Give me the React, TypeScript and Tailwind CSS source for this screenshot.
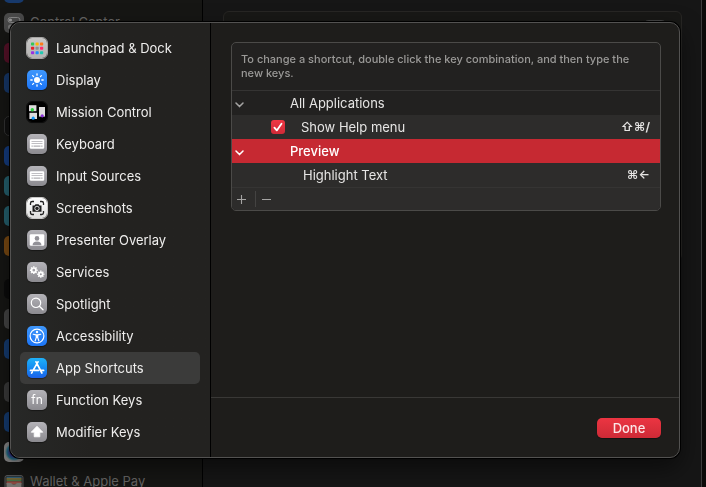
import { useState, type ReactNode } from "react";

function Tile({ className, children }: { className: string; children?: ReactNode }) {
  return (
    <span className={`flex size-5 shrink-0 items-center justify-center overflow-hidden rounded-[5px] shadow-[0_1px_1px_rgba(0,0,0,0.4)] ${className}`}>
      {children}
    </span>
  );
}

const grayTile = "bg-linear-to-b from-[#b4b3b8] to-[#8b8a8f]";
const blueTile = "bg-linear-to-b from-[#3f97fb] to-[#1b74f6]";

function Svg({ children }: { children: ReactNode }) {
  return (
    <svg viewBox="0 0 20 20" className="size-5" fill="none" aria-hidden="true">
      {children}
    </svg>
  );
}

const launchpadDots = [
  "#35c759", "#ffb400", "#ff7a1a",
  "#e8202c", "#8e8e93", "#ff2d6f",
  "#9b30e0", "#1a8cff", "#20c9b0",
];

const LaunchpadIcon = () => (
  <Tile className="bg-linear-to-b from-[#c9c8c7] to-[#b4b3b2] outline outline-[#a5a4a3]">
    <Svg>
      {launchpadDots.map((fill, i) => (
        <rect key={i} x={4 + (i % 3) * 4.5} y={4.4 + Math.floor(i / 3) * 4.4} width="3.2" height="3" rx="0.7" fill={fill} />
      ))}
    </Svg>
  </Tile>
);

const DisplayIcon = () => (
  <Tile className={blueTile}>
    <Svg>
      <circle cx="10" cy="10" r="3" fill="#fff" />
      {[0, 45, 90, 135, 180, 225, 270, 315].map((a) => (
        <path key={a} d="M10 5.2V3.8" stroke="#fff" strokeWidth="1.3" strokeLinecap="round" transform={`rotate(${a} 10 10)`} />
      ))}
    </Svg>
  </Tile>
);

const MissionIcon = () => (
  <Tile className="bg-black outline outline-[#0b0b0b]">
    <Svg>
      <rect x="2" y="3.2" width="7.4" height="6" fill="#dcdadb" />
      <rect x="2.4" y="10.8" width="7.6" height="6.2" fill="#dcdadb" />
      <rect x="12" y="5" width="6" height="9.6" fill="#dcdadb" />
      <circle cx="5.3" cy="7.8" r="1.7" fill="#28d13d" />
      <circle cx="6.2" cy="16.2" r="1.6" fill="#1295f5" />
      <circle cx="15.2" cy="13.8" r="1.6" fill="#8c31d8" />
    </Svg>
  </Tile>
);

const KeyboardIcon = () => (
  <Tile className={grayTile}>
    <Svg>
      <rect x="2.8" y="5.2" width="14.4" height="9.6" rx="1.3" fill="#fff" />
      <path d="M4.5 7.5h11M4.5 9.5h11" stroke="#c0bfc3" strokeWidth="1.2" />
      <path d="M4.5 12.2h1.3M6.5 12.2h7M14.2 12.2h1.3" stroke="#b0afb3" strokeWidth="1.2" />
    </Svg>
  </Tile>
);

const ScreenshotsIcon = () => (
  <Tile className="bg-linear-to-b from-white to-[#dededd] outline outline-[#c9c8c7]">
    <Svg>
      <path d="M3.5 7V5.3Q3.5 3.5 5.3 3.5H7M13 3.5h1.7q1.8 0 1.8 1.8V7M16.5 13v1.7q0 1.8-1.8 1.8H13M7 16.5H5.3q-1.8 0-1.8-1.8V13" stroke="#222" strokeWidth="1.3" />
      <path d="M5.5 7.4h2l1-1.2h3l1 1.2h2v6.3h-9z" fill="#1b1b1b" />
      <circle cx="10" cy="10.4" r="2.2" fill="#222" stroke="#eee" strokeWidth="0.9" />
    </Svg>
  </Tile>
);

const PresenterIcon = () => (
  <Tile className={grayTile}>
    <Svg>
      <rect x="2.7" y="4.2" width="14.6" height="11.6" rx="1.3" fill="#fff" />
      <circle cx="10" cy="8.4" r="2.3" fill="#929197" />
      <path d="M5.6 15.2q0-3.7 4.4-3.7t4.4 3.7z" fill="#929197" />
    </Svg>
  </Tile>
);

const Gear = ({ cx, cy, r }: { cx: number; cy: number; r: number }) => (
  <g stroke="#fff">
    <circle cx={cx} cy={cy} r={r} strokeWidth="1.7" />
    {[0, 45, 90, 135, 180, 225, 270, 315].map((a) => (
      <path key={a} d={`M${cx} ${cy - r - 0.6}v-1.1`} strokeWidth="1.4" transform={`rotate(${a} ${cx} ${cy})`} />
    ))}
  </g>
);

const ServicesIcon = () => (
  <Tile className={grayTile}>
    <Svg>
      <Gear cx={6.8} cy={8.2} r={2.2} />
      <Gear cx={13.8} cy={12.2} r={1.9} />
    </Svg>
  </Tile>
);

const SpotlightIcon = () => (
  <Tile className={grayTile}>
    <Svg>
      <circle cx="9" cy="8.8" r="4.7" stroke="#fff" strokeWidth="1.2" />
      <path d="m12.4 12.3 3.6 3.5" stroke="#fff" strokeWidth="1.4" strokeLinecap="round" />
    </Svg>
  </Tile>
);

const AccessibilityIcon = () => (
  <Tile className={blueTile}>
    <Svg>
      <circle cx="10" cy="10" r="6.9" stroke="#fff" strokeWidth="1.2" />
      <circle cx="10" cy="6" r="1.2" fill="#fff" />
      <path d="M6.2 8.2 9 8.9h2l2.8-.7M10 9v2.4M9.2 9v2.8L8.1 15M10.8 9v2.8l1.1 3.2" stroke="#fff" strokeWidth="1.1" strokeLinecap="round" strokeLinejoin="round" />
    </Svg>
  </Tile>
);

const AppStoreIcon = () => (
  <Tile className="bg-linear-to-b from-[#1fb1f8] to-[#1c62ea]">
    <Svg>
      <path d="M9 3.8 14.9 15M11 3.8 6.2 12.2M3.5 12.4h8M14 12.4h2.6M5.2 14.1l-.6 1" stroke="#fff" strokeWidth="1.7" strokeLinecap="round" />
    </Svg>
  </Tile>
);

const FnIcon = () => (
  <Tile className={grayTile}>
    <span className="text-[12px] leading-none text-white">fn</span>
  </Tile>
);

const ModifierIcon = () => (
  <Tile className={grayTile}>
    <Svg>
      <path d="M10 4.2 15.8 10.2H12.8V14.8H7.2V10.2H4.2z" fill="#fff" stroke="#fff" strokeWidth="0.8" strokeLinejoin="round" />
    </Svg>
  </Tile>
);

const categories = [
  { name: "Launchpad & Dock", Icon: LaunchpadIcon },
  { name: "Display", Icon: DisplayIcon },
  { name: "Mission Control", Icon: MissionIcon },
  { name: "Keyboard", Icon: KeyboardIcon },
  { name: "Input Sources", Icon: KeyboardIcon },
  { name: "Screenshots", Icon: ScreenshotsIcon },
  { name: "Presenter Overlay", Icon: PresenterIcon },
  { name: "Services", Icon: ServicesIcon },
  { name: "Spotlight", Icon: SpotlightIcon },
  { name: "Accessibility", Icon: AccessibilityIcon },
  { name: "App Shortcuts", Icon: AppStoreIcon },
  { name: "Function Keys", Icon: FnIcon },
  { name: "Modifier Keys", Icon: ModifierIcon },
];

const Chevron = () => (
  <svg viewBox="0 0 9 6" className="mt-1 ml-[3px] h-[6px] w-[9px]" fill="none" aria-hidden="true">
    <path d="M1 1l3.5 3.6L8 1" stroke="currentColor" strokeWidth="1.5" strokeLinecap="round" strokeLinejoin="round" />
  </svg>
);

function ShortcutTable() {
  const [helpOn, setHelpOn] = useState(true);
  return (
    <section className="overflow-hidden rounded-[5px] border border-[#4b4a48] bg-[#222120]">
      <p className="h-[47px] pt-[9px] pr-5 pl-[9px] text-[11px] leading-[14px] font-medium text-[#9b9a98]">
        To change a shortcut, double click the key combination, and then type the new keys.
      </p>
      <table className="w-full table-fixed border-separate border-spacing-0 border-y border-[#353433] text-[13px] leading-4 text-[#e6e5e4]">
        <colgroup>
          <col className="w-[58px]" />
          <col />
          <col className="w-20" />
        </colgroup>
        <tbody>
          <tr className="h-6">
            <td className="p-0 text-[#a5a4a3]">
              <button type="button" aria-label="Collapse All Applications" className="block"><Chevron /></button>
            </td>
            <td className="p-0" colSpan={2}>All Applications</td>
          </tr>
          <tr className="h-6 bg-[#2d2c2b]">
            <td className="p-0">
              <span className="mr-[5px] ml-auto grid size-[14px]">
                <input
                  id="help-menu"
                  type="checkbox"
                  checked={helpOn}
                  onChange={() => setHelpOn(!helpOn)}
                  className="col-start-1 row-start-1 size-[14px] appearance-none rounded-[3px] bg-[#555] checked:bg-linear-to-b checked:from-[#ee3744] checked:to-[#d02a37]"
                />
                {helpOn && (
                  <svg viewBox="0 0 14 14" className="pointer-events-none col-start-1 row-start-1 size-[14px]" fill="none" aria-hidden="true">
                    <path d="M3.4 7.6 5.8 10.4 10.5 3.8" stroke="#fff" strokeWidth="1.8" strokeLinecap="round" strokeLinejoin="round" />
                  </svg>
                )}
              </span>
            </td>
            <td className="p-0 pl-[11px]"><label htmlFor="help-menu">Show Help menu</label></td>
            <td className="p-0 pr-[10px] text-right font-['Inter','DejaVu_Sans',sans-serif] text-[12px] font-semibold">⇧⌘/</td>
          </tr>
          <tr className="h-6 bg-[#c62932] font-medium text-white">
            <td className="p-0">
              <button type="button" aria-label="Collapse Preview" className="block"><Chevron /></button>
            </td>
            <td className="p-0" colSpan={2}>Preview</td>
          </tr>
          <tr className="h-6 bg-[#2d2c2b]">
            <td className="p-0" />
            <td className="p-0 pl-[13px]">Highlight Text</td>
            <td className="p-0 pr-[10px] text-right font-['Inter','DejaVu_Sans',sans-serif] text-[12px] font-semibold">⌘←</td>
          </tr>
        </tbody>
      </table>
      <div className="flex h-[22px] items-center bg-[#2d2c2b] text-[#a5a4a3]">
        <button type="button" aria-label="Add shortcut" className="flex h-4 w-6 items-center justify-center border-r border-[#444342] pr-1">
          <svg viewBox="0 0 9 9" className="size-[9px]" aria-hidden="true"><path d="M0 4.5h9M4.5 0v9" stroke="currentColor" strokeWidth="1.1" /></svg>
        </button>
        <button type="button" aria-label="Remove shortcut" className="flex h-4 w-6 items-center justify-center pr-1">
          <svg viewBox="0 0 9 9" className="size-[9px]" aria-hidden="true"><path d="M0 4.5h9" stroke="currentColor" strokeWidth="1.1" /></svg>
        </button>
      </div>
    </section>
  );
}

const ControlCenterIcon = () => (
  <Svg>
    <rect x="4" y="4.5" width="12" height="5" rx="2.5" stroke="#858585" />
    <rect x="4" y="11.5" width="12" height="5" rx="2.5" fill="#777" />
    <circle cx="6.5" cy="7" r="1.6" fill="#999" />
  </Svg>
);

const WalletIcon = () => (
  <Svg>
    <rect x="1" y="3.5" width="18" height="14" rx="2" fill="#282827" stroke="#555" />
    <path d="M2.5 5.5h15" stroke="#315c72" strokeWidth="1.6" />
    <path d="M2.5 7h15" stroke="#8b7131" strokeWidth="1.6" />
    <path d="M2.5 8.5h15" stroke="#467146" strokeWidth="1.6" />
    <path d="M2.5 9.3h15v3h-15z" fill="#8d4940" />
    <path d="M2.5 11h4.5q3 3 6 0h4.5v6h-15z" fill="#777570" />
  </Svg>
);

type Pane = { tile: string; label?: string; Icon?: () => ReactNode };

const settingsGroups: Pane[][] = [
  [
    { tile: "bg-[#17396b]" },
    { tile: "bg-[#4a4a4a]", label: "Control Center", Icon: ControlCenterIcon },
    { tile: "bg-[#561128]" },
    { tile: "bg-[#17396b]" },
  ],
  [
    { tile: "bg-[#111111] border border-[#333]" },
    { tile: "bg-[#143c80]" },
    { tile: "bg-[#25616f]" },
    { tile: "bg-[#25616f]" },
    { tile: "bg-[#7b4a12]" },
  ],
  [{ tile: "bg-[#0b0b0b]" }, { tile: "bg-[#454545]" }, { tile: "bg-[#153c72]" }],
  [
    { tile: "bg-[#3b3b3b]" },
    { tile: "bg-[#153c72]" },
    { tile: "bg-radial from-[#2d2a78] from-30% via-[#1f6b80] via-50% to-[#858585] to-65%" },
    { tile: "", label: "Wallet & Apple Pay", Icon: WalletIcon },
  ],
];

function SettingsWindow() {
  return (
    <div aria-hidden="true" className="flex h-full overflow-hidden bg-[#0c0b0a]">
      <div className="w-[203px] shrink-0 overflow-hidden border-r border-black bg-[#161614] pl-1 text-[13px] text-[#666564]">
        <div className="-mt-[17px] flex flex-col gap-[23px]">
          {settingsGroups.map((group, g) => (
            <div key={g} className="flex flex-col gap-[10px]">
              {group.map(({ tile, label, Icon }, i) => (
                <div key={i} className="flex h-5 items-center gap-[6px]">
                  <span className={`flex size-5 shrink-0 items-center justify-center rounded-[5px] ${tile}`}>
                    {Icon && <Icon />}
                  </span>
                  {label}
                </div>
              ))}
            </div>
          ))}
        </div>
      </div>
      <div className="mr-1 flex-1 border-r border-[#3d3d3d] bg-[#161616] pt-[11px] pr-[19px] pl-5">
        <div className="flex h-[250px] justify-end rounded-[6px] border border-[#272624] bg-[#181816] px-3 pt-2">
          <span className="h-4 w-7 rounded-full border border-[#444] bg-[#2a2a29]" />
        </div>
      </div>
    </div>
  );
}

export default function App() {
  const [selected, setSelected] = useState("App Shortcuts");
  return (
    <main className="h-screen overflow-hidden font-['Inter',sans-serif]">
      <SettingsWindow />
      <div className="fixed inset-0 flex pt-[22px] pr-[26px] pb-[29px] pl-[10px]">
        <div
          role="dialog"
          aria-label="Keyboard Shortcuts"
          className="flex flex-1 overflow-hidden rounded-[10px] border border-[#535251] bg-[#1e1d1b] shadow-[0_0_0_1px_#000,0_10px_24px_rgba(0,0,0,0.5)]"
        >
          <nav className="w-[200px] shrink-0 border-r border-black bg-linear-to-r from-[#272827] to-[#232220] to-40% py-[9px] pr-[10px] pl-[9px]">
            {categories.map(({ name, Icon }) => (
              <button
                key={name}
                type="button"
                onClick={() => setSelected(name)}
                className={`flex h-8 w-full items-center gap-[9px] rounded-[5px] px-[7px] text-left text-[13px] leading-4 text-[#efeeed] ${selected === name ? "bg-[#3b3b3a]" : ""}`}
              >
                <Icon />
                {name}
              </button>
            ))}
          </nav>
          <div className="flex min-w-0 flex-1 flex-col">
            <div className="flex-1 pt-[19px] pr-[18px] pl-5">
              <ShortcutTable />
            </div>
            <footer className="flex h-[60px] items-center justify-end border-t border-[#393836] pr-[18px]">
              <button type="button" className="h-5 w-16 rounded-[5px] bg-linear-to-b from-[#ec3542] to-[#cd2a36] text-[13px] leading-4 font-medium text-[#fbe6e7] shadow-[0_1px_1px_rgba(0,0,0,0.4)]">
                Done
              </button>
            </footer>
          </div>
        </div>
      </div>
    </main>
  );
}
